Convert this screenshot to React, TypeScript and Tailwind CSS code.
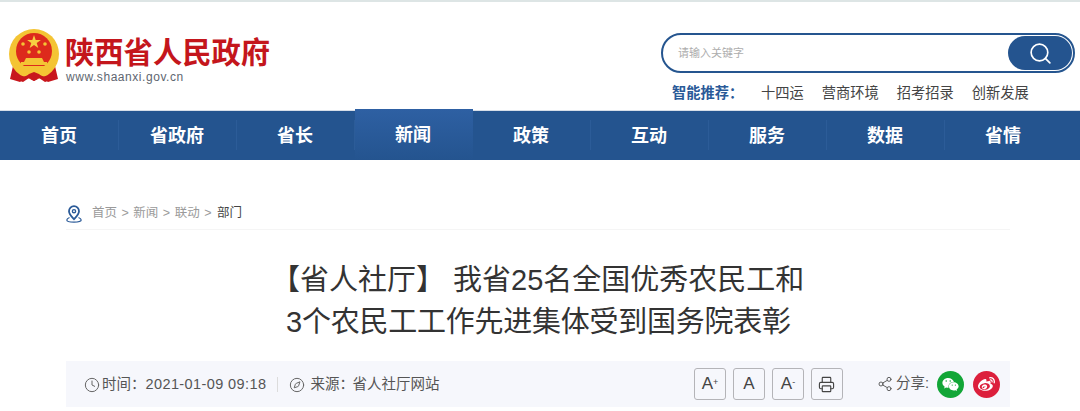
import { Clock, Compass, Printer, Search, Share2 } from 'lucide-react';
import { FaWeibo, FaWeixin } from 'react-icons/fa';

const navItems = ['首页', '省政府', '省长', '新闻', '政策', '互动', '服务', '数据', '省情'];
const recommendations = ['十四运', '营商环境', '招考招录', '创新发展'];

function Emblem() {
	return (
		<svg viewBox="0 0 52 56" className="h-[56px] w-[52px] shrink-0" aria-hidden="true">
			<path d="M5 37 L2 50 L12 53 L18 48 L26 52 L34 48 L40 53 L50 50 L47 37 Z" fill="#c8161d" />
			<circle cx="26" cy="25" r="25" fill="#f4c434" />
			<circle cx="26" cy="22" r="18" fill="#dd2a1c" />
			<path d="M26 6 l1.7 5 h5.2 l-4.2 3.1 1.6 5 -4.3 -3.1 -4.3 3.1 1.6 -5 -4.2 -3.1 h5.2 Z" fill="#f6cf42" />
			<circle cx="15" cy="15" r="1.800" fill="#f4c434" />
			<circle cx="37" cy="15" r="1.800" fill="#f4c434" />
			<circle cx="21" cy="23" r="1.800" fill="#f4c434" />
			<circle cx="31" cy="23" r="1.800" fill="#f4c434" />
			<path d="M18 29 h16 l2 4 h3 v3 h-26 v-3 h3 Z" fill="#f4c434" />
			<path d="M9 37 h34 v4 c-4 3 -7 5 -11 2 l-6 -2 -6 2 c-4 3 -7 1 -11 -2 Z" fill="#f4c434" />
			<path d="M8 44 c5 5 10 4 13 1 l5 -2 5 2 c3 3 8 4 13 -1 l2 6 -9 3 -6 -4 -5 3 -5 -3 -6 4 -9 -3 Z" fill="#c8161d" />
		</svg>
	);
}

function LocationIcon() {
	return (
		<svg viewBox="0 0 16 18" className="h-[18px] w-4" fill="none" stroke="#2a5a98" aria-hidden="true">
			<path d="M8 1.2 a5 5 0 0 0 -5 5 c0 3 3 5.800 5 8 c2 -2.200 5 -5 5 -8 a5 5 0 0 0 -5 -5 Z" strokeWidth="1.800" />
			<circle cx="8" cy="6.200" r="1.600" strokeWidth="1.400" />
			<path d="M3.500 12.500 C1.500 13.300 .8 14.200 .8 15 c0 1.300 3 2.200 7.200 2.200 s7.200 -.9 7.200 -2.200 c0 -.8 -.7 -1.700 -2.700 -2.500" strokeWidth="1.200" />
		</svg>
	);
}

function ToolButton({ children }: { children: React.ReactNode }) {
	return (
		<button
			type="button"
			className="flex h-[32px] w-[32px] items-center justify-center rounded-[3px] border border-[#b4b4b8] text-[#444]"
		>
			{children}
		</button>
	);
}

export default function App() {
	return (
		<div className="h-[411px] w-[1080px] overflow-hidden bg-white font-['Liberation_Sans','Noto_Sans_CJK_SC',sans-serif]">
			<header className="flex h-[110px] items-start justify-between border-t-2 border-[#dde5e5] pl-[8px] pr-[5px]">
				<div className="mt-[27px] flex items-start gap-[5px]">
					<Emblem />
					<div className="pt-[7px]">
						<div className="text-[29.300px] leading-[33px] font-bold text-[#c4161c]">陕西省人民政府</div>
						<div className="mt-[1px] ml-[1px] text-[12px] leading-[14px] tracking-[0.55px] text-[#5e6670]">www.shaanxi.gov.cn</div>
					</div>
				</div>

				<div className="mt-[31px] w-[414px]">
					<div className="flex h-[40px] items-center justify-between rounded-full border-[2px] border-[#25558f] pl-[15px] pr-[1px]">
						<span className="text-[11px] text-[#adadad]">请输入关键字</span>
						<div className="flex h-[34px] w-[64px] items-center justify-center rounded-full bg-[#24548f]">
							<Search className="h-[25px] w-[25px] text-white" strokeWidth={1.600} aria-hidden="true" />
						</div>
					</div>
					<div className="mt-[10px] flex items-center pl-[11px] text-[14.250px] leading-[20px]">
						<span className="w-[89px] font-bold text-[#2a5a98]">智能推荐：</span>
						<div className="flex gap-[18px] text-[#444]">
							{recommendations.map((item) => (
								<span key={item}>{item}</span>
							))}
						</div>
					</div>
				</div>
			</header>

			<nav className="flex h-[50px] items-end bg-[#24548f] pl-[1px] shadow-[inset_0_1px_0_#d7dee8]">
				{navItems.map((item, i) => (
					<div
						key={item}
						className={
							item === '新闻'
								? 'flex h-[51px] w-[118px] items-center justify-center bg-gradient-to-b from-[#2e60a3] to-[#24548f] pt-[2px] pr-[2px] text-[18px] font-bold text-white'
								: 'relative flex h-[50px] w-[118px] items-center justify-center pt-[2px] pr-[2px] text-[18px] font-bold text-white'
						}
					>
						{item}
						{i < navItems.length - 1 && item !== '新闻' && (
							<span className="absolute top-[10px] right-0 h-[30px] w-px bg-[#2c5c98]" />
						)}
					</div>
				))}
			</nav>

			<main className="pl-[66px] pr-[70px]">
				<div className="flex h-[70px] items-end border-b border-[#f5f5f5] pb-[6px]">
					<div className="flex items-center gap-[10px] text-[12.500px] text-[#9a9a9a]">
						<LocationIcon />
						<div className="flex gap-[4.500px]">
							<span>首页</span>
							<span>&gt;</span>
							<span>新闻</span>
							<span>&gt;</span>
							<span>联动</span>
							<span>&gt;</span>
							<span className="ml-[1px] text-[#444]">部门</span>
						</div>
					</div>
				</div>

				<h1 className="mt-[29px] pl-[205px] text-[29px] leading-[42px] font-normal text-[#333]">
					<div>【省人社厅】 我省25名全国优秀农民工和</div>
					<div className="pl-[15px] tracking-[-0.25px]">3个农民工工作先进集体受到国务院表彰</div>
				</h1>

				<div className="mt-[18px] flex h-[46px] items-center justify-between bg-[#f6f7fc] pl-[18px] pr-[10px] text-[14.500px] text-[#555]">
					<div className="flex items-center pt-[1px]">
						<Clock className="h-[16px] w-[16px] text-[#666]" strokeWidth={1.500} aria-hidden="true" />
						<span className="ml-[2px]">时间：</span>
						<span className="tracking-[0.4px]">2021-01-09 09:18</span>
						<span className="mx-[11px] h-[15px] w-px bg-[#dcdcdc]" />
						<Compass className="h-[16px] w-[16px] text-[#666]" strokeWidth={1.500} aria-hidden="true" />
						<span className="ml-[5px] w-[42px] whitespace-nowrap">来源：</span>
						<span>省人社厅网站</span>
					</div>

					<div className="flex items-center">
						<div className="flex gap-[7px]">
							<ToolButton>
								<span className="text-[17px]">A<sup className="text-[9px]">+</sup></span>
							</ToolButton>
							<ToolButton>
								<span className="text-[17px]">A</span>
							</ToolButton>
							<ToolButton>
								<span className="text-[17px]">A<sup className="text-[9px]">-</sup></span>
							</ToolButton>
							<ToolButton>
								<Printer className="h-[17px] w-[17px]" strokeWidth={1.600} aria-hidden="true" />
							</ToolButton>
						</div>
						<Share2 className="ml-[34px] h-[16px] w-[16px] text-[#555]" strokeWidth={1.400} aria-hidden="true" />
						<span className="ml-[3px]">分享:</span>
						<div className="ml-[8px] flex gap-[9px]">
							<div className="flex h-[27px] w-[27px] items-center justify-center rounded-full bg-[#12a637] text-white">
								<FaWeixin className="h-[17px] w-[17px]" aria-hidden="true" />
							</div>
							<div className="flex h-[27px] w-[27px] items-center justify-center rounded-full bg-[#dc1f3c] text-white">
								<FaWeibo className="h-[17px] w-[17px]" aria-hidden="true" />
							</div>
						</div>
					</div>
				</div>
			</main>
		</div>
	);
}
